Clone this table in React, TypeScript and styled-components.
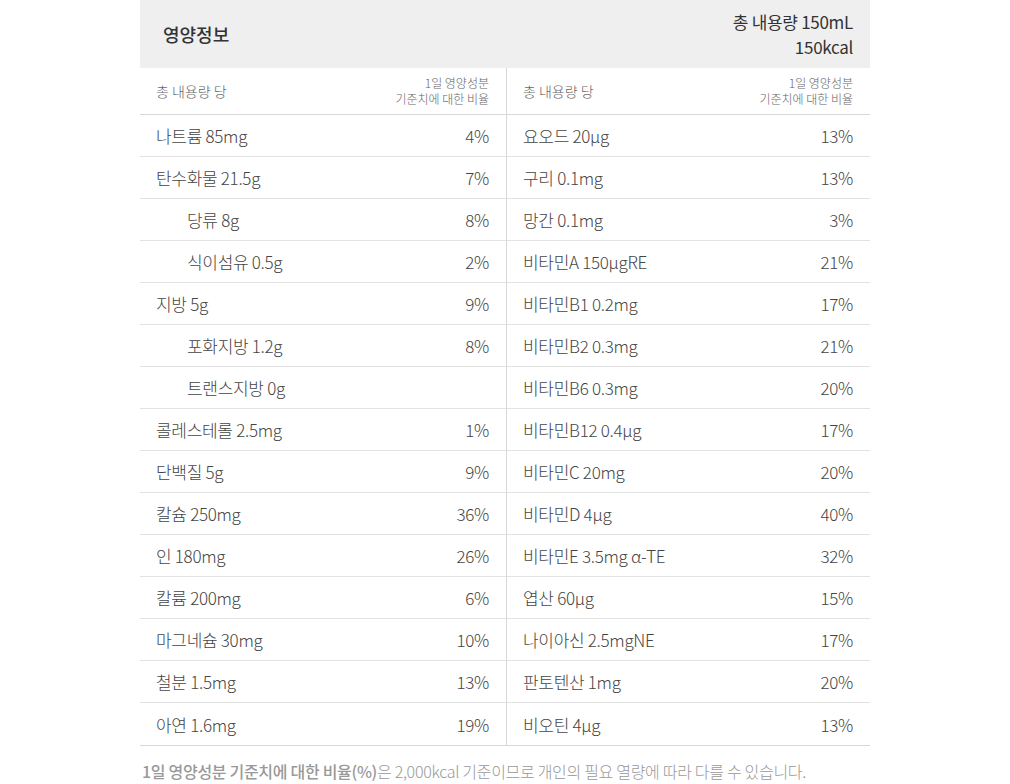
import styled, { createGlobalStyle } from 'styled-components'

const GlobalStyle = createGlobalStyle`
  body {
    margin: 0;
    background: #fff;
    font-family: 'Noto Sans CJK KR', 'Noto Sans', sans-serif;
    color: #444;
  }
`

type Item = { name: string; pct?: string; sub?: boolean }

const leftItems: Item[] = [
  { name: '나트륨 85mg', pct: '4%' },
  { name: '탄수화물 21.5g', pct: '7%' },
  { name: '당류 8g', pct: '8%', sub: true },
  { name: '식이섬유 0.5g', pct: '2%', sub: true },
  { name: '지방 5g', pct: '9%' },
  { name: '포화지방 1.2g', pct: '8%', sub: true },
  { name: '트랜스지방 0g', sub: true },
  { name: '콜레스테롤 2.5mg', pct: '1%' },
  { name: '단백질 5g', pct: '9%' },
  { name: '칼슘 250mg', pct: '36%' },
  { name: '인 180mg', pct: '26%' },
  { name: '칼륨 200mg', pct: '6%' },
  { name: '마그네슘 30mg', pct: '10%' },
  { name: '철분 1.5mg', pct: '13%' },
  { name: '아연 1.6mg', pct: '19%' },
]

const rightItems: Item[] = [
  { name: '요오드 20μg', pct: '13%' },
  { name: '구리 0.1mg', pct: '13%' },
  { name: '망간 0.1mg', pct: '3%' },
  { name: '비타민A 150μgRE', pct: '21%' },
  { name: '비타민B1 0.2mg', pct: '17%' },
  { name: '비타민B2 0.3mg', pct: '21%' },
  { name: '비타민B6 0.3mg', pct: '20%' },
  { name: '비타민B12 0.4μg', pct: '17%' },
  { name: '비타민C 20mg', pct: '20%' },
  { name: '비타민D 4μg', pct: '40%' },
  { name: '비타민E 3.5mg α-TE', pct: '32%' },
  { name: '엽산 60μg', pct: '15%' },
  { name: '나이아신 2.5mgNE', pct: '17%' },
  { name: '판토텐산 1mg', pct: '20%' },
  { name: '비오틴 4μg', pct: '13%' },
]

const Wrapper = styled.div`
  width: 730px;
  margin: 0 auto;
`

const Header = styled.div`
  height: 68px;
  background: #efefef;
  display: flex;
  justify-content: space-between;
  align-items: center;
  padding: 0 17px 0 23px;
  box-sizing: border-box;
`

const Title = styled.h2`
  margin: 0;
  font-size: 18px;
  font-weight: 500;
  color: #333;
`

const Total = styled.div`
  text-align: right;
  font-size: 17px;
  line-height: 25px;
  color: #333;
  font-weight: 400;
  letter-spacing: -0.3px;
`

const Columns = styled.div`
  display: grid;
  grid-template-columns: 366px 364px;
  border-bottom: 1px solid #d8d8d8;
`

const Column = styled.div<{ $divider?: boolean }>`
  border-left: ${({ $divider }) => ($divider ? '1px solid #d8d8d8' : 'none')};
`

const HeadRow = styled.div`
  height: 47px;
  display: flex;
  align-items: center;
  justify-content: space-between;
  padding: 0 17px 0 16px;
  border-bottom: 1px solid #d8d8d8;
  box-sizing: border-box;
  color: #666;
`

const HeadLabel = styled.span`
  font-size: 14px;
  font-weight: 300;
`

const HeadNote = styled.span`
  font-size: 12px;
  line-height: 16px;
  text-align: right;
  font-weight: 300;
`

const Row = styled.div<{ $sub?: boolean; $last?: boolean }>`
  height: 42px;
  display: flex;
  align-items: center;
  justify-content: space-between;
  padding: 0 17px 0 ${({ $sub }) => ($sub ? '47px' : '16px')};
  border-bottom: ${({ $last }) => ($last ? 'none' : '1px solid #e3e3e3')};
  box-sizing: border-box;
  font-size: 17px;
  font-weight: 300;
  color: #444;
  letter-spacing: -0.3px;
`

const Footnote = styled.p`
  margin: 13px 0 0 2px;
  font-size: 16px;
  font-weight: 300;
  color: #999;
  letter-spacing: -0.3px;
`

const Strong = styled.span`
  font-weight: 500;
`

function NutritionColumn({ items, divider }: { items: Item[]; divider?: boolean }) {
  return (
    <Column $divider={divider}>
      <HeadRow>
        <HeadLabel>총 내용량 당</HeadLabel>
        <HeadNote>
          1일 영양성분
          <br />
          기준치에 대한 비율
        </HeadNote>
      </HeadRow>
      {items.map((item, i) => (
        <Row key={item.name} $sub={item.sub} $last={i === items.length - 1}>
          <span>{item.name}</span>
          <span>{item.pct}</span>
        </Row>
      ))}
    </Column>
  )
}

export default function App() {
  return (
    <>
      <GlobalStyle />
      <Wrapper>
        <Header>
          <Title>영양정보</Title>
          <Total>
            총 내용량 150mL
            <br />
            150kcal
          </Total>
        </Header>
        <Columns>
          <NutritionColumn items={leftItems} />
          <NutritionColumn items={rightItems} divider />
        </Columns>
        <Footnote>
          <Strong>1일 영양성분 기준치에 대한 비율(%)</Strong>은 2,000kcal 기준이므로 개인의 필요 열량에 따라
          다를 수 있습니다.
        </Footnote>
      </Wrapper>
    </>
  )
}
